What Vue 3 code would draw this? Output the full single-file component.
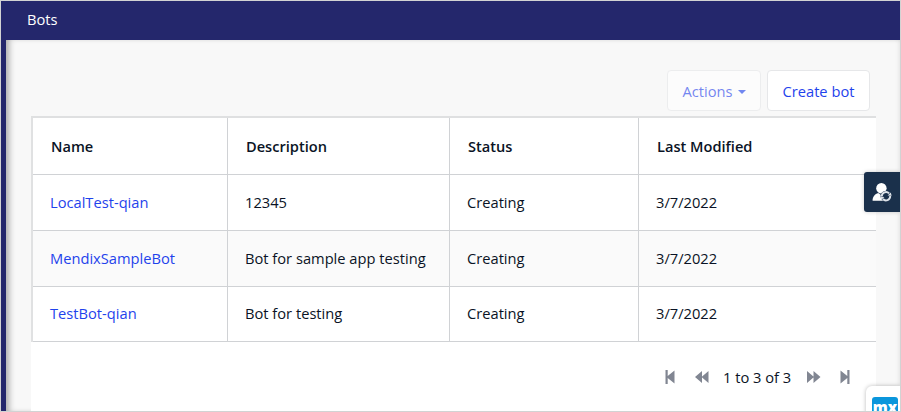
<script setup>
const columns = ['Name', 'Description', 'Status', 'Last Modified']
const bots = [
  { name: 'LocalTest-qian', description: '12345', status: 'Creating', modified: '3/7/2022' },
  { name: 'MendixSampleBot', description: 'Bot for sample app testing', status: 'Creating', modified: '3/7/2022' },
  { name: 'TestBot-qian', description: 'Bot for testing', status: 'Creating', modified: '3/7/2022' },
]
</script>

<template>
  <div class="page">
    <header class="topbar">Bots</header>
    <div class="body">
      <aside class="rail"></aside>
      <main class="content">
        <div class="toolbar">
          <button class="btn disabled">Actions <span class="caret"></span></button>
          <button class="btn create">Create bot</button>
        </div>
        <section class="panel">
          <div class="grid">
            <div class="row head">
              <div v-for="c in columns" :key="c" class="cell">{{ c }}</div>
            </div>
            <div v-for="b in bots" :key="b.name" class="row">
              <div class="cell"><a class="link">{{ b.name }}</a></div>
              <div class="cell">{{ b.description }}</div>
              <div class="cell">{{ b.status }}</div>
              <div class="cell">{{ b.modified }}</div>
            </div>
          </div>
          <nav class="pager">
            <svg class="edge" width="10" height="14" viewBox="0 0 10 14"><path d="M.5 0H2.7V6L9.5 .6V13.4L2.7 8V14H.5Z" /></svg>
            <svg class="step" width="14" height="12" viewBox="0 0 14 12"><path d="M7 0V12L0 6ZM13.5 0V12L6.5 6Z" /></svg>
            <span class="count">1 to 3 of 3</span>
            <svg class="step" width="14" height="12" viewBox="0 0 14 12"><path d="M0 0L7 6L0 12ZM6.5 0L13.5 6L6.5 12Z" /></svg>
            <svg class="edge" width="10" height="14" viewBox="0 0 10 14"><path d="M9.5 0H7.3V6L.5 .6V13.4L7.3 8V14H9.5Z" /></svg>
          </nav>
        </section>
      </main>
    </div>
    <div class="user-tab">
      <svg width="20" height="20" viewBox="0 0 20 20">
        <circle cx="9.4" cy="6.2" r="5.2" fill="#fff" />
        <path d="M.6 18.8C.6 14.5 3 12 6.2 11L9.4 13.2L12 11L14 18.8Z" fill="#fff" />
        <circle cx="14" cy="14.2" r="5.5" fill="#1a304b" />
        <g fill="none" stroke="#dce1e7" stroke-width="1.9">
          <path d="M9.8 14.4A4.2 4.2 0 0 1 17.1 11.4" />
          <path d="M18.2 14A4.2 4.2 0 0 1 10.9 17" />
        </g>
        <path d="M15.6 13.4L19.7 13.8L18.7 10.4ZM12.4 15L8.3 14.6L9.3 18Z" fill="#dce1e7" />
      </svg>
    </div>
    <div class="mx-badge"><span class="mx">mx</span></div>
  </div>
</template>

<style>
body { margin: 0; overflow: hidden; }
</style>

<style scoped>
* { box-sizing: border-box; }
.page {
  position: relative;
  display: flex;
  flex-direction: column;
  width: 901px;
  height: 412px;
  border: 1px solid #d2d3d3;
  overflow: hidden;
  background: #f8f8f8;
  color: #0a1325;
  font: 14.68px/20px "Open Sans", sans-serif;
}
.topbar {
  flex: 0 0 39px;
  padding: 8px 0 0 26px;
  background: #24276c;
  color: #fff;
}
.body { display: flex; flex: 1; min-height: 0; }
.rail { flex: 0 0 5px; background: #24276c; }
.content {
  flex: 1;
  min-width: 0;
  padding: 30px 24px 0 25px;
  box-shadow: inset 6px 0 6px -3px #aaa, inset -3px 0 4px -2px #e2e2e2;
}
.toolbar { display: flex; justify-content: flex-end; gap: 6px; height: 46px; padding-right: 6px; }
.btn {
  display: flex;
  align-items: center;
  justify-content: center;
  width: 94px;
  height: 41px;
  padding: 0;
  border: 1px solid #e6e7e9;
  border-radius: 4px;
  background: #fff;
  color: #1f43ec;
  font: inherit;
}
.create { width: 103px; }
.disabled { opacity: .62; }
.caret {
  margin: 2px 0 0 5px;
  border: 4.5px solid transparent;
  border-top: 4.5px solid #1f43ec;
  border-bottom: 0;
}
.panel { height: 300px; background: #fff; }
.grid { border-top: 2px solid #dfe0e1; border-left: 2px solid #e0e1e2; }
.row {
  display: grid;
  grid-template-columns: 195px 222px 189px 1fr;
  height: 56px;
  border-bottom: 1px solid #d0d2d5;
}
.row.head { height: 57px; font-weight: 600; font-size: 14.6px; }
.row:nth-child(3) { background: #fafafa; }
.row:last-child { height: 55px; }
.cell { display: flex; align-items: center; padding: 0 0 1px 17px; border-right: 1px solid #d0d2d5; white-space: nowrap; }
.head .cell { padding: 0 0 1px 18px; }
.row:last-child .cell { padding-bottom: 2px; }
.cell:last-child { border-right: 0; }
.link { color: #1f43ec; }
.pager { display: flex; align-items: center; height: 70px; padding-left: 634px; fill: #818692; }
.pager svg { flex: none; }
.edge:first-child { margin-right: 20px; }
.count { width: 69px; margin: 0 15px 0 14px; white-space: nowrap; }
.edge:last-child { margin-left: 19px; }
.user-tab {
  position: absolute;
  top: 171px;
  right: 0;
  display: flex;
  width: 36px;
  height: 40px;
  padding: 10px 0 0 8px;
  border-radius: 3px 0 0 3px;
  background: #1a304b;
  box-shadow: 0 0 4px #0003;
}
.mx-badge {
  position: absolute;
  right: 0;
  bottom: -12px;
  width: 34px;
  height: 37px;
  padding: 11px 0 0 6px;
  border-radius: 6px 0 0 0;
  background: #fff;
  box-shadow: 0 0 4px #0004;
}
.mx {
  display: block;
  width: 26px;
  height: 26px;
  border-radius: 3px;
  background: #0a96dc;
  color: #fff;
  font: 800 15px/21px "Open Sans", sans-serif;
  text-align: center;
}
</style>
